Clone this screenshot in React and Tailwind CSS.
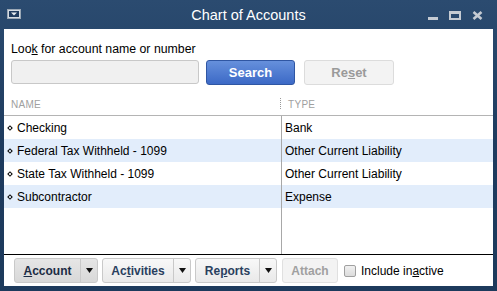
import React from "react";

const rows = [
  { name: "Checking", type: "Bank" },
  { name: "Federal Tax Withheld - 1099", type: "Other Current Liability" },
  { name: "State Tax Withheld - 1099", type: "Other Current Liability" },
  { name: "Subcontractor", type: "Expense" },
];

function Arrow() {
  return (
    <svg width="7" height="5" viewBox="0 0 7 5">
      <path d="M0 0h7L3.5 5z" fill="#111" />
    </svg>
  );
}

function SplitButton({ children, width, pressed }) {
  return (
    <div
      className={`flex h-[25px] shrink-0 rounded-[3px] border border-[#c9c9c9] ${
        pressed ? "bg-gradient-to-b from-[#e6e6e6] to-[#d8d8d8]" : "bg-gradient-to-b from-[#f8f8f8] to-[#e9e9e9]"
      } ${width}`}
    >
      <div className="flex-1 flex items-center justify-center font-bold text-[#2a3f5e]">{children}</div>
      <div className="w-[17px] border-l border-[#c9c9c9] flex items-center justify-center">
        <Arrow />
      </div>
    </div>
  );
}

export default function App() {
  return (
    <div
      className="w-[497px] h-[291px] bg-gradient-to-b from-[#2b4b70] via-[#1e3b5e] to-[#1d3a5c] flex flex-col px-[4px] pb-[5px] text-[12px] text-black"
      style={{ fontFamily: '"Liberation Sans", Arial, sans-serif' }}
    >
      {/* Title bar */}
      <div className="h-[29px] relative flex items-center justify-center shrink-0">
        <svg className="absolute left-[3px] top-[9px]" width="14" height="10" viewBox="0 0 14 10">
          <rect x="0.5" y="0.5" width="13" height="9" fill="#d5dbe2" stroke="#9aa7b5" />
          <rect x="2" y="2" width="10" height="6" fill="#1f3b5e" />
          <path d="M4 3.5h6L7 6.5z" fill="#e8ecf0" />
        </svg>
        <span className="text-white text-[14.5px] mt-[2px]">Chart of Accounts</span>
        <div className="absolute right-[10px] top-[11px] flex items-end gap-[11px]">
          <div className="w-[10px] h-[3px] bg-[#c5cbd3]" />
          <div className="w-[12px] h-[9px] border-[2px] border-t-[3px] border-[#c5cbd3]" />
          <svg width="11" height="9" viewBox="0 0 11 9">
            <path d="M1.5 1l8 7M9.5 1l-8 7" stroke="#c5cbd3" strokeWidth="2.6" />
          </svg>
        </div>
      </div>

      {/* Content */}
      <div className="flex-1 bg-white flex flex-col min-h-0">
        <div className="px-[7px] pt-[13px]">
          <div className="leading-[15px] text-[12.3px]">
            Loo<span className="underline">k</span> for account name or number
          </div>
          <div className="flex mt-[3px]">
            <div className="w-[188px] h-[24px] bg-[#f0f0f0] border border-[#c8c8c8] rounded-[3px]" />
            <div className="w-[89px] h-[25px] ml-[7px] rounded-[3px] border border-[#2f56a3] bg-gradient-to-b from-[#6690dc] to-[#3c69c6] flex items-center justify-center text-white font-bold text-[13px]">
              Search
            </div>
            <div className="w-[90px] h-[25px] ml-[9px] rounded-[3px] border border-[#dcdcdc] bg-[#f3f3f3] flex items-center justify-center text-[#9a9a9a] font-bold text-[13px]">
              Re<span className="underline">s</span>et
            </div>
          </div>
        </div>

        {/* Table header */}
        <div className="mt-[8px] h-[23px] flex border-b border-[#b4b4b4] text-[10px] text-[#a0a0a0] tracking-[0.3px] shrink-0">
          <div className="w-[277px] pl-[7px] flex items-center relative pt-[1px]">
            NAME
            <div className="absolute right-0 top-[5px] h-[11px] border-r border-dotted border-[#999]" />
          </div>
          <div className="pl-[7px] flex items-center pt-[1px]">TYPE</div>
        </div>

        {/* Rows */}
        <div className="flex-1 flex flex-col min-h-0">
          {rows.map((r, i) => (
            <div key={i} className={`h-[23px] flex shrink-0 ${i % 2 ? "bg-[#e2edfb]" : "bg-white"}`}>
              <div className="w-[277px] flex items-center pl-[4px]">
                <div className="w-[4px] h-[4px] rotate-45 border border-black mr-[5px]" />
                {r.name}
              </div>
              <div className="border-l border-[#a8a8a8] pl-[3px] flex items-center">{r.type}</div>
            </div>
          ))}
          <div className="flex-1 flex">
            <div className="w-[277px]" />
            <div className="border-l border-[#a8a8a8]" />
          </div>
        </div>

        {/* Bottom bar */}
        <div className="h-[32px] border-t border-black flex items-center pl-[10px] gap-[4px] shrink-0">
          <SplitButton width="w-[84px]" pressed>
            <span className="text-[#1c2c44]">
              <span className="underline">A</span>ccount
            </span>
          </SplitButton>
          <SplitButton width="w-[89px]">
            Ac<span className="underline">t</span>ivities
          </SplitButton>
          <SplitButton width="w-[82px]">
            Re<span className="underline">p</span>orts
          </SplitButton>
          <div className="w-[56px] h-[25px] ml-[1px] rounded-[3px] border border-[#e0e0e0] bg-[#f3f3f3] flex items-center justify-center text-[#a0a0a0] font-bold">
            Attach
          </div>
          <div className="flex items-center ml-[2px]">
            <div className="w-[12px] h-[12px] border border-[#a0a0a0] rounded-[2px] bg-gradient-to-b from-[#f0f0f0] to-[#dcdcdc]" />
            <span className="ml-[5px]">
              Include in<span className="underline">a</span>ctive
            </span>
          </div>
        </div>
      </div>
    </div>
  );
}
